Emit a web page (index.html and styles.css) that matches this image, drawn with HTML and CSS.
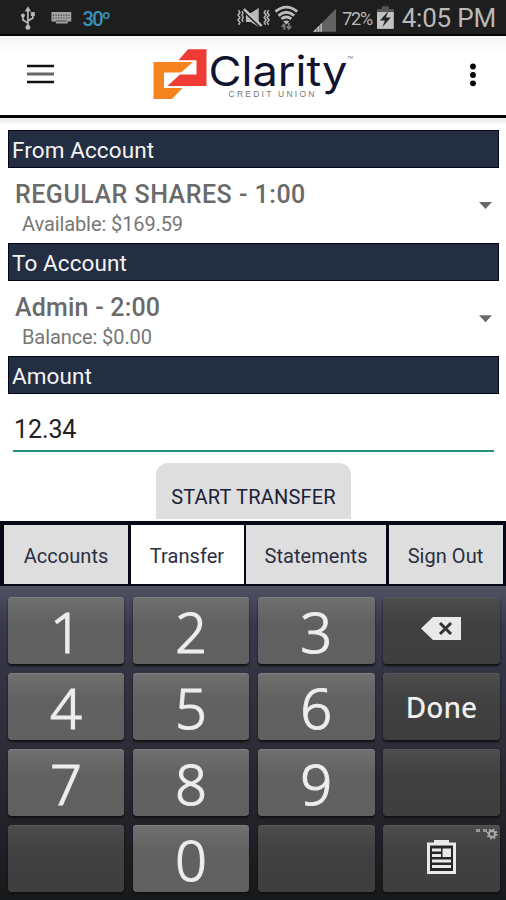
FILE: index.html
```html
<!DOCTYPE html>
<html lang="en">
<head>
    <meta charset="UTF-8">
    <meta name="viewport" content="width=device-width, initial-scale=1.0">
    <title>Clarity Credit Union - Transfer</title>
    <link rel="stylesheet" href="styles.css">
</head>
<body>

    <div class="status-bar">
        <svg class="usb" width="18" height="26" viewBox="0 0 18 26">
            <path d="M8 6v15M8 18L3 15v-4M8 16l5-3V9" fill="none" stroke="#b9b9b9" stroke-width="1.7"/>
            <path d="M8 1l3.2 5.5H4.8z" fill="#b9b9b9"/>
            <circle cx="8" cy="22.5" r="2.5" fill="#b9b9b9"/>
            <circle cx="3" cy="10.5" r="2" fill="#b9b9b9"/>
            <path d="M11 7h4v4h-4z" fill="#b9b9b9"/>
        </svg>
        <svg class="keyboard-icon" width="22" height="13" viewBox="0 0 22 13">
            <path d="M.5 0h20v9.500h-3.500v2h-12v-2h-4.500z" fill="#a2a2a2"/>
            <path d="M2 3h18M2 6h18" stroke="#333" stroke-width="1.200" stroke-dasharray="1.100 1.500"/>
            <path d="M5 9h11" stroke="#444" stroke-width="1"/>
        </svg>
        <span class="temp">30º</span>
        <svg class="mute" width="36" height="22" viewBox="0 0 36 22">
            <path d="M2.500 3l1.500 2.500-2 2.500 2 2.500-2 2.500 2 2.500-1.500 2.500M6 4l1.300 2-1.300 2 1.300 2.500L6 13l1.300 2M30 3l-1.500 2.500 2 2.500-2 2.500 2 2.500-2 2.500 1.500 2.500M33 3l-1.500 2.500 2 2.500-2 2.500 2 2.500-2 2.500 1.500 2.500" fill="none" stroke="#b4b4b4" stroke-width="1.500"/>
            <path d="M10 6h5l8-5v19l-8-5h-5z" fill="#b9b9b9"/>
            <path d="M8 4l18 17" stroke="#1e1e1e" stroke-width="2.500"/>
            <path d="M8 2l18 17" stroke="#c4c4c4" stroke-width="2.500"/>
        </svg>
        <svg class="wifi" width="26" height="26" viewBox="0 0 26 26">
            <path d="M1.500 6.500q11-9 22 0M4.500 10.500q8-6.500 16 0M7.500 14q5-4 10 0" fill="none" stroke="#bdbdbd" stroke-width="2.900"/>
            <path d="M9.500 16.500q3-2 6 0l-3 3z" fill="#bdbdbd"/>
            <path d="M10.500 25v-6m-2.500 3l2.500-3M15 18v6m-2-2.500l2 2.500 2.500-2.500" fill="none" stroke="#777" stroke-width="2"/>
        </svg>
        <svg class="signal" width="24" height="24" viewBox="0 0 24 24">
            <path d="M0 24L24 0v24z" fill="#626262"/>
            <path d="M0 24l9-9v9z" fill="#c4c4c4"/>
            <path d="M4 24v-4M7 24v-7" stroke="#555" stroke-width="1"/>
        </svg>
        <span class="percent">72%</span>
        <svg class="battery" width="17" height="24" viewBox="0 0 17 24">
            <path d="M5 0h7v3h5v8H0V3h5z" fill="#555"/>
            <path d="M0 6h17v17H0z" fill="#c2c2c2"/>
            <path d="M11.500 5L3 14.500h5L5.500 21l8.500-9.500H9z" fill="#222"/>
        </svg>
        <span class="clock">4:05 PM</span>
    </div>

    <header class="header">
        <svg class="menu" width="27" height="20" viewBox="0 0 27 20">
            <path d="M0 2h27M0 18h27" stroke="#111" stroke-width="2.600"/>
            <path d="M0 10h27" stroke="#666" stroke-width="3"/>
        </svg>
        <svg class="logo" width="204" height="54" viewBox="152 47 204 54">
            <path d="M153.500 62h39.500l-12 10.500h-17v15.500h18.500L172 99h-18.500z" fill="#f5831f"/>
            <path d="M188 49.300h18.500V86H167.500l12.500-11.500h16.500V60.300H178.500z" fill="#ee3b33"/>
            <text class="logo-name" x="208.500" y="86" textLength="139" lengthAdjust="spacingAndGlyphs">Clarity</text>
            <text class="logo-sub" x="228.500" y="97" textLength="86">CREDIT UNION</text>
            <text class="logo-tm" x="347" y="64">™</text>
        </svg>
        <svg class="more" width="8" height="24" viewBox="0 0 8 24">
            <circle cx="4" cy="3.500" r="2.900"/>
            <circle cx="4" cy="12" r="2.900"/>
            <circle cx="4" cy="20.300" r="2.900"/>
        </svg>
    </header>

    <main class="form">
        <h2 class="bar">From Account</h2>
        <div class="account">
            <div>
                <div class="account-name">REGULAR SHARES - 1:00</div>
                <div class="account-info">Available: $169.59</div>
            </div>
            <span class="arrow"></span>
        </div>
        <h2 class="bar">To Account</h2>
        <div class="account">
            <div>
                <div class="account-name admin">Admin - 2:00</div>
                <div class="account-info">Balance: $0.00</div>
            </div>
            <span class="arrow"></span>
        </div>
        <h2 class="bar">Amount</h2>
        <div class="amount">12.34</div>
        <button class="start">START TRANSFER</button>
    </main>

    <nav class="tabs">
        <a class="tab">Accounts</a>
        <a class="tab active">Transfer</a>
        <a class="tab">Statements</a>
        <a class="tab">Sign Out</a>
    </nav>

    <div class="keypad">
        <div class="key">1</div>
        <div class="key">2</div>
        <div class="key">3</div>
        <div class="key dark">
            <svg class="backspace" width="42" height="26" viewBox="0 0 42 26">
                <path d="M1 12.500L13 1h28v23H13z" fill="#e9e9e9"/>
                <path d="M20 7l11 11M31 7L20 18" stroke="#333" stroke-width="3"/>
            </svg>
        </div>
        <div class="key">4</div>
        <div class="key">5</div>
        <div class="key">6</div>
        <div class="key dark done">Done</div>
        <div class="key">7</div>
        <div class="key">8</div>
        <div class="key">9</div>
        <div class="key dark"></div>
        <div class="key dark"></div>
        <div class="key">0</div>
        <div class="key dark"></div>
        <div class="key dark">
            <svg class="clipboard" width="29" height="34" viewBox="0 0 29 34">
                <path d="M1.500 4h26v28.500h-26z" fill="#262626" stroke="#e9e9e9" stroke-width="3"/>
                <path d="M7 0h15v5H7z" fill="#e9e9e9"/>
                <path d="M5 10h9M5 15.500h9M5 21h19M5 26.500h19" stroke="#e9e9e9" stroke-width="3"/>
                <path d="M15.500 8.500h8.500v8.500h-8.500z" fill="#e9e9e9"/>
            </svg>
            <svg class="gear" width="24" height="12" viewBox="0 0 24 12">
                <path d="M0 1h4v3H0zM7 1h4v3H7z" fill="#999"/>
                <circle cx="16" cy="6" r="4.500" fill="none" stroke="#aaa" stroke-width="2" stroke-dasharray="1.770 1.770"/>
                <circle cx="16" cy="6" r="3" fill="none" stroke="#aaa" stroke-width="2"/>
            </svg>
        </div>
    </div>

</body>
</html>
```
FILE: styles.css
```css
* { box-sizing: border-box; }

body {
    margin: 0;
    width: 506px;
    height: 900px;
    overflow: hidden;
    display: flex;
    flex-direction: column;
    background: #fff;
    font-family: Roboto, sans-serif;
}

/* Status bar */
.status-bar {
    height: 36px;
    flex: none;
    display: flex;
    align-items: center;
    padding: 0 10px 0 20px;
    background: #1e1e1e;
    border-bottom: 2px solid #080808;
    color: #b9b9b9;
    white-space: nowrap;
}
.usb { margin-top: 2px; }
.keyboard-icon { margin-left: 13px; margin-top: 2px; }
.temp { width: 27px; margin-left: 10px; margin-top: 3px; color: #3692bd; font-size: 20px; font-weight: 500; letter-spacing: -1.700px; }
.mute { margin-left: 127px; margin-top: 2px; }
.wifi { margin-left: 2px; margin-top: 1px; }
.signal { margin-left: 13px; margin-top: 5px; }
.percent { width: 31px; margin-left: 6px; margin-top: 3px; font-size: 18px; letter-spacing: -1.300px; }
.battery { margin-left: 4px; margin-top: 2px; }
.clock { margin-left: 8px; margin-top: 2px; font-size: 26px; letter-spacing: -0.2px; }

/* Header */
.header {
    height: 82px;
    flex: none;
    display: flex;
    align-items: flex-start;
    padding-left: 27px;
    background: linear-gradient(#f4f4f4, #fff 16px);
    border-bottom: 3px solid #050505;
}
.menu { margin-top: 28px; }
.logo { margin: 11px 0 0 98px; }
.more { margin: 27px 0 0 113px; }
.logo-name { font-family: Inter, sans-serif; font-size: 41px; fill: #11142f; }
.logo-sub { font-family: "Liberation Sans", sans-serif; font-size: 8.500px; fill: #777; }
.logo-tm { font-family: Inter, sans-serif; font-size: 10px; fill: #888; }

/* Transfer form */
.form {
    height: 403px;
    flex: none;
    display: flex;
    flex-direction: column;
    padding: 12px 7px 0 8px;
    background: linear-gradient(#efefef, #efefef 4px, #fff 6px);
    overflow: hidden;
}
.bar {
    height: 38px;
    flex: none;
    margin: 0;
    padding-left: 3px;
    border: 1px solid #04061c;
    background: #242e42;
    color: #f4f4f4;
    font-size: 22.500px;
    line-height: 38px;
    font-weight: 400;
    letter-spacing: 0.1px;
}
.account {
    height: 75.200px;
    flex: none;
    display: flex;
    justify-content: space-between;
    padding: 12px 7px 0 7px;
    color: #6a6a6a;
}
.account-name { font-size: 25px; line-height: 30px; font-weight: 500; letter-spacing: 0.5px; }
.account-name.admin { letter-spacing: 0.2px; }
.account-info { margin-top: -1px; padding-left: 7px; font-size: 20px; line-height: 30px; letter-spacing: -0.1px; color: #777; }
.arrow {
    width: 13px;
    height: 7px;
    margin-top: 22px;
    background: #6a6a6a;
    clip-path: polygon(0 0, 100% 0, 50% 100%);
}
.amount {
    height: 58px;
    flex: none;
    margin: 0 5px;
    padding: 19px 0 0 1px;
    border-bottom: 2px solid #26907f;
    color: #222;
    font-size: 25px;
    line-height: 34px;
    letter-spacing: -0.1px;
}
.start {
    width: 195px;
    height: 56px;
    flex: none;
    align-self: center;
    margin-top: 11px;
    padding: 12px 0 0;
    border: none;
    border-radius: 12px 12px 0 0;
    background: #dedede;
    color: #1c2038;
    font-family: Roboto, sans-serif;
    font-size: 20px;
    letter-spacing: 0.2px;
}

/* Bottom tabs */
.tabs {
    height: 65px;
    flex: none;
    display: grid;
    grid-template-columns: 124px 113px 140px 114px;
    gap: 2.500px;
    padding: 4px 2px 2px 4px;
    background: #060818;
}
.tab {
    display: flex;
    align-items: center;
    justify-content: center;
    padding-top: 2px;
    background: #dedede;
    color: #2a2e42;
    font-size: 20px;
    letter-spacing: 0.05px;
}
.tab.active { background: #fff; }

/* Keypad */
.keypad {
    flex: 1;
    display: grid;
    grid-template-columns: repeat(4, 116.800px);
    grid-auto-rows: 67px;
    gap: 9px 8.400px;
    padding: 11px 0 0 7.500px;
    background: linear-gradient(#505163, #37384a 40px, #2d2d38 50%, #18191b);
}
.key {
    display: flex;
    position: relative;
    align-items: center;
    justify-content: center;
    border-radius: 4px;
    background: linear-gradient(#707070, #616161 40%, #606060);
    box-shadow: 0 2px 2px #111, inset 0 1px #808080;
    color: #efefef;
    font-family: "Noto Sans", sans-serif;
    font-size: 56px;
    font-weight: 300;
    line-height: 60px;
    -webkit-text-stroke: 1.200px #e9e9e9;
}
.key.dark { background: linear-gradient(#4d4d4d, #414141 40%, #3e3e3e); box-shadow: 0 2px 2px #111, inset 0 1px #575757; }
.key.done { font-size: 28px; font-weight: 500; -webkit-text-stroke: 0; }
.backspace { margin-top: -3px; }
.clipboard { margin-top: -3px; }
.gear { position: absolute; top: 3px; right: 0; }
```
